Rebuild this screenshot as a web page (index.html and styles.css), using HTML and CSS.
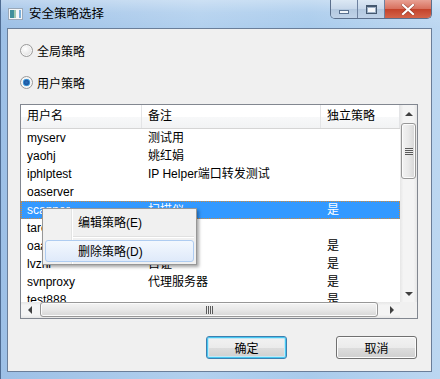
FILE: index.html
```html
<!DOCTYPE html>
<html lang="zh-CN">
<head>
<meta charset="UTF-8">
<title>安全策略选择</title>
<link rel="stylesheet" href="styles.css">
</head>
<body>
  <div class="window">
    <div class="titlebar">
      <svg class="app-icon" width="15" height="12" viewBox="0 0 15 12">
        <rect x="0.5" y="0.5" width="14" height="11" fill="#f4f6f8" stroke="#9aa8b8"/>
        <rect x="2" y="2" width="4" height="8" fill="#3f8f9c"/>
        <rect x="6" y="2" width="2" height="8" fill="#9cc8b0"/>
        <rect x="11" y="2" width="2" height="8" fill="#7ab0dc"/>
      </svg>
      <span class="title">安全策略选择</span>
      <div class="controls">
        <div class="ctl ctl-min"><span class="min-bar"></span></div>
        <div class="ctl ctl-max"><span class="max-box"></span></div>
        <div class="ctl ctl-close">
          <svg width="14" height="11" viewBox="0 0 14 11">
            <path d="M2 1 L12 10 M12 1 L2 10" stroke="#6b2a20" stroke-width="3.4" stroke-linecap="square" opacity="0.5"/>
            <path d="M2 1 L12 10 M12 1 L2 10" stroke="#fff" stroke-width="2.2" stroke-linecap="square"/>
          </svg>
        </div>
      </div>
    </div>

    <div class="client">
      <label class="radio-row">
        <span class="radio"></span>
        <span>全局策略</span>
      </label>
      <label class="radio-row">
        <span class="radio checked"></span>
        <span>用户策略</span>
      </label>

      <div class="list">
        <div class="list-body">
          <div class="list-head">
            <div class="col c1">用户名</div>
            <div class="col c2">备注</div>
            <div class="col c3">独立策略</div>
          </div>
          <div class="row"><div class="col c1">myserv</div><div class="col c2">测试用</div><div class="col c3"></div></div>
          <div class="row"><div class="col c1">yaohj</div><div class="col c2">姚红娟</div><div class="col c3"></div></div>
          <div class="row"><div class="col c1">iphlptest</div><div class="col c2">IP Helper端口转发测试</div><div class="col c3"></div></div>
          <div class="row"><div class="col c1">oaserver</div><div class="col c2"></div><div class="col c3"></div></div>
          <div class="row selected"><div class="col c1">scanner</div><div class="col c2">扫描仪</div><div class="col c3">是</div></div>
          <div class="row"><div class="col c1">tarena</div><div class="col c2"></div><div class="col c3"></div></div>
          <div class="row"><div class="col c1">oaadmin</div><div class="col c2"></div><div class="col c3">是</div></div>
          <div class="row"><div class="col c1">lvzhi</div><div class="col c2">自证</div><div class="col c3">是</div></div>
          <div class="row"><div class="col c1">svnproxy</div><div class="col c2">代理服务器</div><div class="col c3">是</div></div>
          <div class="row"><div class="col c1">test888</div><div class="col c2"></div><div class="col c3">是</div></div>
        </div>

        <div class="vscroll">
          <div class="arrow"><span class="tri-up"></span></div>
          <div class="vtrack">
            <div class="vthumb"><span class="grip-h"></span></div>
          </div>
          <div class="arrow"><span class="tri-down"></span></div>
        </div>
        <div class="hscroll">
          <div class="arrow"><span class="tri-left"></span></div>
          <div class="htrack">
            <div class="hthumb"><span class="grip-v"></span></div>
          </div>
          <div class="arrow"><span class="tri-right"></span></div>
        </div>
        <div class="corner"></div>

        <div class="menu">
          <div class="menu-item">编辑策略(E)</div>
          <div class="menu-sep"></div>
          <div class="menu-item hot">删除策略(D)</div>
        </div>
      </div>

      <div class="buttons">
        <button class="btn default">确定</button>
        <button class="btn">取消</button>
      </div>
    </div>
  </div>
</body>
</html>
```

FILE: styles.css
```css
* {
  box-sizing: border-box;
}

body {
  margin: 0;
  font-family: "Liberation Sans", "Noto Sans CJK SC", sans-serif;
  font-size: 12px;
  color: #000;
}

.window {
  width: 440px;
  height: 379px;
  background: linear-gradient(90deg, #9dc0e6 0%, #b2d0ee 45%, #a9cbec 70%, #bcd7f1 100%);
  border-left: 1px solid #4f6c92;
  display: flex;
  flex-direction: column;
}

/* 标题栏 */
.titlebar {
  height: 28px;
  display: flex;
  align-items: flex-start;
  background: linear-gradient(180deg, rgba(255, 255, 255, 0.35) 0%, rgba(255, 255, 255, 0.1) 45%, rgba(255, 255, 255, 0) 100%);
}

.app-icon {
  margin: 8px 0 0 7px;
}

.title {
  margin: 7px 0 0 6px;
  line-height: 14px;
  font-size: 12.5px;
  color: #000;
}

.controls {
  margin-left: auto;
  margin-right: 8px;
  display: flex;
  height: 19px;
  border: 1px solid #5b6f8c;
  border-top: none;
  border-radius: 0 0 5px 5px;
  overflow: hidden;
}

.ctl {
  height: 18px;
  display: flex;
  align-items: center;
  justify-content: center;
}

.ctl-min {
  width: 27px;
  background: linear-gradient(180deg, #dce8f4 0%, #c6d7ea 50%, #b3c8df 51%, #bfd2e8 100%);
  border-right: 1px solid #6d819f;
}

.ctl-max {
  width: 27px;
  background: linear-gradient(180deg, #dce8f4 0%, #c6d7ea 50%, #b3c8df 51%, #bfd2e8 100%);
  border-right: 1px solid #6d819f;
}

.ctl-close {
  width: 46px;
  background: linear-gradient(180deg, #e8a093 0%, #d8715e 48%, #c4432b 52%, #d4644a 100%);
}

.min-bar {
  width: 10px;
  height: 4px;
  margin-top: 5px;
  background: #f2f6fa;
  border: 1px solid #59708f;
}

.max-box {
  width: 11px;
  height: 9px;
  border: 1px solid #44586f;
  border-top-width: 2px;
  background: #f4f7fa;
  box-shadow: inset 0 0 0 1px #9fb1c6;
}

/* 客户区 */
.client {
  height: 344px;
  margin: 0 8px 7px 6px;
  border: 1px solid #6a7e99;
  background: #f0f0f0;
  padding: 13px 13px 0 12px;
  display: flex;
  flex-direction: column;
}

.radio-row {
  height: 16px;
  display: flex;
  align-items: center;
  gap: 4px;
  margin-bottom: 16px;
}

.radio-row:nth-of-type(2) {
  margin-bottom: 14px;
}

.radio {
  width: 13px;
  height: 13px;
  border-radius: 50%;
  border: 1px solid #9a9a9a;
  background: radial-gradient(circle at 40% 35%, #ffffff 0%, #e9e9e9 55%, #cfcfcf 100%);
  box-shadow: inset 0 0 0 1px #f8f8f8;
}

.radio.checked {
  background: radial-gradient(circle at 50% 50%, #2a6db8 0%, #1a5aa4 30%, #5fb4ea 46%, #f3f3f3 52%, #dcdcdc 100%);
}

/* 列表 */
.list {
  position: relative;
  width: 398px;
  height: 215px;
  border: 1px solid #828790;
  background: #fff;
  display: grid;
  grid-template-columns: 1fr 17px;
  grid-template-rows: 1fr 16px;
}

.list-body {
  overflow: hidden;
}

.list-head {
  height: 24px;
  display: flex;
  background: linear-gradient(180deg, #ffffff 0%, #ffffff 50%, #f7f8f9 51%, #f2f3f4 100%);
  border-bottom: 1px solid #d5d5d5;
}

.list-head .col {
  line-height: 23px;
  border-right: 1px solid #e3e4e6;
}

.col {
  flex: none;
  padding-left: 6px;
  white-space: nowrap;
  overflow: hidden;
}

.c1 {
  width: 121px;
}

.c2 {
  width: 179px;
}

.c3 {
  width: 79px;
}

.row {
  height: 18px;
  display: flex;
  line-height: 18px;
}

.row.selected {
  background: #3399ff;
  color: #fff;
  outline: 1px dotted #d08a3a;
  outline-offset: -1px;
}

/* 滚动条 */
.vscroll {
  display: flex;
  flex-direction: column;
  background: linear-gradient(90deg, #e6e6e6 0%, #f4f4f4 20%, #f4f4f4 80%, #e6e6e6 100%);
}

.hscroll {
  display: flex;
  background: linear-gradient(180deg, #e6e6e6 0%, #f4f4f4 20%, #f4f4f4 80%, #e6e6e6 100%);
}

.corner {
  background: #f0f0f0;
}

.arrow {
  flex: none;
  width: 17px;
  height: 17px;
  display: flex;
  align-items: center;
  justify-content: center;
}

.hscroll .arrow {
  height: 16px;
}

.vtrack {
  flex: 1;
  padding: 1px 1px 0 1px;
}

.vthumb {
  height: 56px;
  border: 1px solid #979797;
  border-radius: 3px;
  background: linear-gradient(90deg, #f3f3f3 0%, #e8e8e8 50%, #d6d6d6 100%);
  box-shadow: inset 0 0 0 1px #fbfbfb;
  display: flex;
  align-items: center;
  justify-content: center;
}

.htrack {
  flex: 1;
  padding: 0 1px 0 1px;
}

.hthumb {
  height: 15px;
  border: 1px solid #979797;
  border-radius: 3px;
  background: linear-gradient(180deg, #f3f3f3 0%, #e8e8e8 50%, #d6d6d6 100%);
  box-shadow: inset 0 0 0 1px #fbfbfb;
  display: flex;
  align-items: center;
  justify-content: center;
  margin-left: 1px;
  margin-right: 4px;
}

.grip-h {
  width: 8px;
  height: 7px;
  background: repeating-linear-gradient(180deg, #5a5a5a 0, #5a5a5a 1px, #eaeaea 1px, #eaeaea 2px);
}

.grip-v {
  width: 7px;
  height: 8px;
  background: repeating-linear-gradient(90deg, #5a5a5a 0, #5a5a5a 1px, #eaeaea 1px, #eaeaea 2px);
}

.tri-up,
.tri-down,
.tri-left,
.tri-right {
  width: 0;
  height: 0;
  border: 4px solid transparent;
}

.tri-up {
  border-bottom-color: #404040;
  border-top-width: 0;
}

.tri-down {
  border-top-color: #404040;
  border-bottom-width: 0;
}

.tri-left {
  border-right-color: #404040;
  border-left-width: 0;
}

.tri-right {
  border-left-color: #404040;
  border-right-width: 0;
}

/* 右键菜单 */
.menu {
  position: absolute;
  left: 21px;
  top: 103px;
  width: 155px;
  padding: 2px;
  border: 1px solid #979797;
  background: linear-gradient(90deg, #f1f1f1 0, #f1f1f1 28px, #e2e3e3 28px, #e2e3e3 29px, #ffffff 29px, #ffffff 30px, #f0f0f0 30px);
  box-shadow: 2px 2px 3px rgba(0, 0, 0, 0.35);
}

.menu-item {
  height: 22px;
  line-height: 22px;
  padding-left: 32px;
  border: 1px solid transparent;
  border-radius: 3px;
}

.menu-item.hot {
  border-color: #aeccf1;
  background: linear-gradient(180deg, #f3f8fe 0%, #e9f1fc 50%, #dfeafa 100%);
}

.menu-sep {
  height: 7px;
  margin-left: 28px;
  background: linear-gradient(180deg, transparent 3px, #e0e0e0 3px, #e0e0e0 4px, #ffffff 4px, #ffffff 5px, transparent 5px);
}

/* 按钮 */
.buttons {
  display: flex;
  justify-content: flex-end;
  gap: 49px;
  margin-top: 17px;
  padding-right: 1px;
}

.btn {
  width: 81px;
  height: 23px;
  font-family: inherit;
  font-size: 12px;
  color: #000;
  border: 1px solid #707070;
  border-radius: 3px;
  background: linear-gradient(180deg, #f2f2f2 0%, #ebebeb 50%, #dddddd 51%, #cfcfcf 100%);
  box-shadow: inset 0 0 0 1px #fcfcfc;
  padding: 0;
}

.btn.default {
  border-color: #3c7fb1;
  box-shadow: inset 0 0 0 1px #48c8f0, inset 0 0 0 2px #c4e8f6;
}
```
